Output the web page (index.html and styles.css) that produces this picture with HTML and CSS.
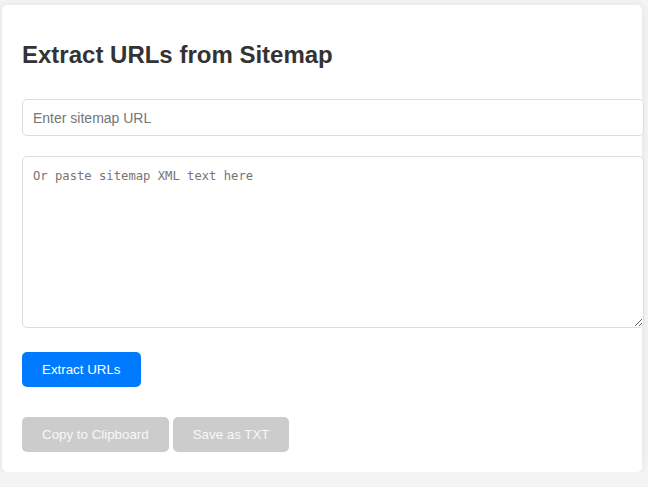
FILE: index.html
```html
<!DOCTYPE html>
<html>
<head>
<meta charset="utf-8">
<link rel="stylesheet" href="styles.css">
</head>
<body>
<div class="card">
  <h1 class="title">Extract URLs from Sitemap</h1>
  <input class="field" type="text" placeholder="Enter sitemap URL">
  <textarea class="xml" placeholder="Or paste sitemap XML text here"></textarea>
  <div class="row-main">
    <button class="btn btn-primary">Extract URLs</button>
  </div>
  <div class="row-actions">
    <button class="btn btn-disabled" disabled>Copy to Clipboard</button>
    <button class="btn btn-disabled" disabled>Save as TXT</button>
  </div>
</div>
</body>
</html>
```
FILE: styles.css
```css
html, body {
  margin: 0;
  background: #f4f4f4;
  font-family: "Liberation Sans", Arial, sans-serif;
}
body {
  padding: 5px 6px 0 2px;
}
.card {
  width: 600px;
  background: #fff;
  border-radius: 5px;
  box-shadow: 0 0 10px rgba(0, 0, 0, 0.08);
  padding: 20px;
}
.title {
  margin: 16px 0 30px;
  font-size: 24px;
  line-height: 28px;
  font-weight: bold;
  color: #333;
}
.field {
  display: block;
  box-sizing: border-box;
  width: 622px;
  height: 37px;
  padding: 0 10px;
  border: 1px solid #ddd;
  border-radius: 5px;
  font-family: "Liberation Sans", Arial, sans-serif;
  font-size: 14px;
  color: #333;
  margin: 0 0 20px;
}
.field::placeholder { color: #757575; }
.xml {
  display: block;
  box-sizing: border-box;
  width: 622px;
  height: 172px;
  padding: 11px 10px;
  border: 1px solid #ddd;
  border-radius: 5px;
  font-family: "DejaVu Sans Mono", monospace;
  font-size: 12.2px;
  line-height: 16px;
  color: #333;
  margin: 0;
}
.xml::placeholder { color: #757575; }
.row-main {
  margin-top: 24px;
  display: flex;
}
.row-actions {
  margin-top: 30px;
  display: flex;
  gap: 4px;
}
.btn {
  height: 35px;
  padding: 0 20px;
  border: none;
  border-radius: 5px;
  font-family: "Liberation Sans", Arial, sans-serif;
  font-size: 13.33px;
  color: #fff;
  cursor: pointer;
}
.btn-primary { background: #007bff; }
.btn-disabled { background: #ccc; color: #f8f8f8; }
```
